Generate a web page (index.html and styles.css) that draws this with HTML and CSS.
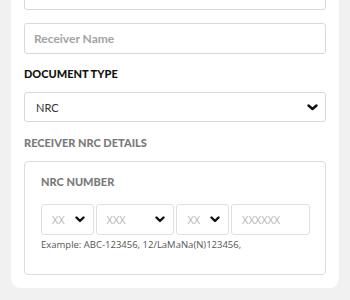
FILE: index.html
```html
<!DOCTYPE html>
<html lang="en">

<head>
    <meta charset="UTF-8">
    <meta name="viewport" content="width=device-width, initial-scale=1.0">
    <title>Receiver Details</title>
    <link rel="stylesheet" href="styles.css">
</head>

<body>
    <div class="page">
        <div class="card">
            <div class="field field-top"></div>

            <div class="field">
                <span class="placeholder">Receiver Name</span>
            </div>

            <div class="label">DOCUMENT TYPE</div>
            <div class="field select">
                <span class="value">NRC</span>
                <svg class="chevron" width="11" height="7" viewBox="0 0 11 7">
                    <polyline points="1.5,1.5 5.5,5 9.5,1.5" fill="none" stroke="#111" stroke-width="2.4"
                        stroke-linecap="round" stroke-linejoin="round" />
                </svg>
            </div>

            <div class="label label-muted">RECEIVER NRC DETAILS</div>
            <div class="nrc-box">
                <div class="label label-muted label-small">NRC NUMBER</div>
                <div class="nrc-row">
                    <div class="nrc-input">
                        <span class="hint">XX</span>
                        <svg class="chevron" width="10" height="7" viewBox="0 0 10 7">
                            <polyline points="1.5,1.5 5,5 8.5,1.5" fill="none" stroke="#111" stroke-width="2.4"
                                stroke-linecap="round" stroke-linejoin="round" />
                        </svg>
                    </div>
                    <div class="nrc-input">
                        <span class="hint">XXX</span>
                        <svg class="chevron" width="10" height="7" viewBox="0 0 10 7">
                            <polyline points="1.5,1.5 5,5 8.5,1.5" fill="none" stroke="#111" stroke-width="2.4"
                                stroke-linecap="round" stroke-linejoin="round" />
                        </svg>
                    </div>
                    <div class="nrc-input">
                        <span class="hint">XX</span>
                        <svg class="chevron" width="10" height="7" viewBox="0 0 10 7">
                            <polyline points="1.5,1.5 5,5 8.5,1.5" fill="none" stroke="#111" stroke-width="2.4"
                                stroke-linecap="round" stroke-linejoin="round" />
                        </svg>
                    </div>
                    <div class="nrc-input">
                        <span class="hint">XXXXXX</span>
                    </div>
                </div>
                <div class="example">Example: ABC-123456, 12/LaMaNa(N)123456,</div>
            </div>
        </div>
    </div>
</body>

</html>
```

FILE: styles.css
```css
body {
    margin: 0;
    background-color: #f1f1f1;
    font-family: Lato, "Open Sans", sans-serif;
    overflow: hidden;
}

.page {
    padding: 0 11px;
}

/* la tarjeta continúa por encima de la ventana */
.card {
    margin-top: -21px;
    background-color: #ffffff;
    border-radius: 0 0 9px 9px;
    padding: 0 13px 13px;
}

.field {
    box-sizing: border-box;
    height: 31px;
    border: 1px solid #d9d9d9;
    border-radius: 3px;
    display: flex;
    align-items: center;
    padding: 0 9px;
    margin-bottom: 13px;
}

.field-top {
    margin-bottom: 13px;
}

.placeholder {
    font-size: 12px;
    font-weight: bold;
    color: #a3a3a3;
}

.label {
    font-size: 11px;
    line-height: 14px;
    font-weight: 900;
    color: #111;
    margin-bottom: 11px;
}

.label-muted {
    color: #7a7a7a;
}

.select {
    height: 30px;
    justify-content: space-between;
    padding: 0 7px 0 11px;
    margin-bottom: 14px;
}

.value {
    font-size: 11px;
    color: #333;
}

.nrc-box {
    border: 1px solid #dcdcdc;
    border-radius: 4px;
    padding: 13px 15px 22px 16px;
}

.label-small {
    margin-bottom: 15px;
}

.nrc-row {
    display: grid;
    grid-template-columns: 2fr 3fr 2fr 3fr;
    gap: 2px;
}

.nrc-input {
    box-sizing: border-box;
    height: 31px;
    border: 1px solid #e0e0e0;
    border-radius: 3px;
    display: flex;
    align-items: center;
    justify-content: space-between;
    padding: 0 8px 0 10px;
}

.hint {
    font-family: "Open Sans", sans-serif;
    font-size: 11px;
    color: #b5b5b5;
}

.example {
    margin-top: 3px;
    font-family: "Open Sans", sans-serif;
    font-size: 9.5px;
    line-height: 14px;
    color: #555;
}
```
